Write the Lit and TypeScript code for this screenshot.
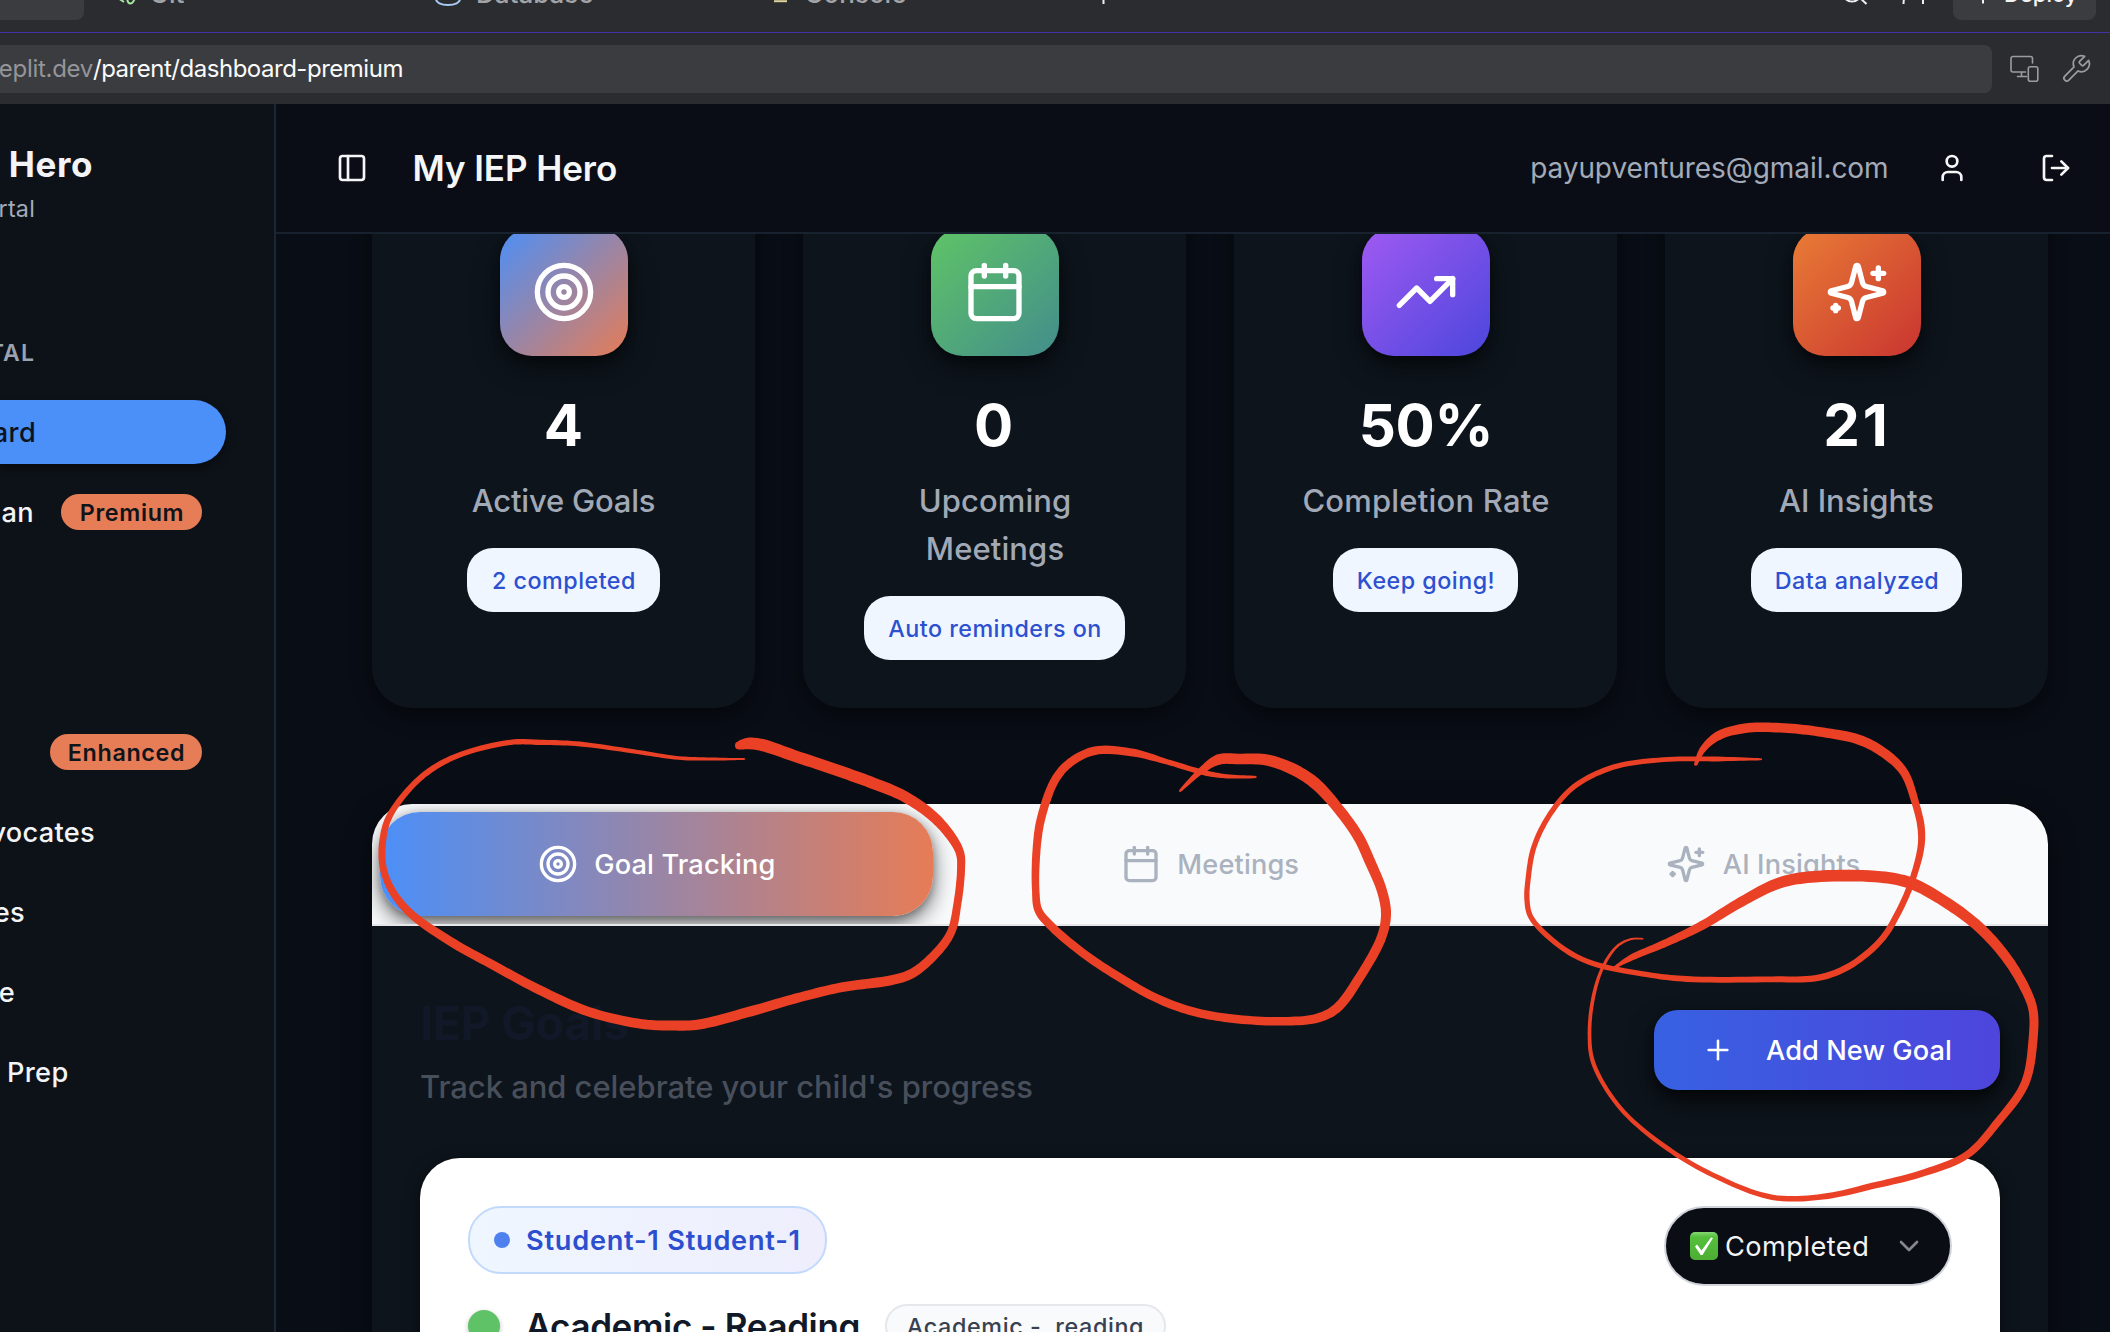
import { LitElement, html, css, svg, nothing } from "lit";
import { customElement, property } from "lit/decorators.js";

const ICONS: Record<string, unknown> = {
  panel: svg`<rect width="18" height="18" x="3" y="3" rx="2"/><path d="M9 3v18"/>`,
  user: svg`<path d="M19 21v-2a4 4 0 0 0-4-4H9a4 4 0 0 0-4 4v2"/><circle cx="12" cy="7" r="4"/>`,
  logout: svg`<path d="M9 21H5a2 2 0 0 1-2-2V5a2 2 0 0 1 2-2h4"/><path d="m16 17 5-5-5-5"/><path d="M21 12H9"/>`,
  target: svg`<circle cx="12" cy="12" r="10"/><circle cx="12" cy="12" r="6"/><circle cx="12" cy="12" r="2"/>`,
  calendar: svg`<path d="M8 2v4"/><path d="M16 2v4"/><rect width="18" height="18" x="3" y="4" rx="2"/><path d="M3 10h18"/>`,
  trend: svg`<path d="M22 7 13.5 15.5 8.5 10.5 2 17"/><path d="M16 7h6v6"/>`,
  sparkles: svg`<path d="M9.937 15.5A2 2 0 0 0 8.5 14.063l-6.135-1.582a.5.5 0 0 1 0-.962L8.5 9.936A2 2 0 0 0 9.937 8.5l1.582-6.135a.5.5 0 0 1 .963 0L14.063 8.5A2 2 0 0 0 15.5 9.937l6.135 1.581a.5.5 0 0 1 0 .964L15.5 14.063a2 2 0 0 0-1.437 1.437l-1.582 6.135a.5.5 0 0 1-.963 0z"/><path d="M20 3v4"/><path d="M22 5h-4"/><path d="M4 17v2"/><path d="M5 18H3"/>`,
  plus: svg`<path d="M5 12h14"/><path d="M12 5v14"/>`,
  chevron: svg`<path d="m6 9 6 6 6-6"/>`,
  wrench: svg`<path d="M14.7 6.3a1 1 0 0 0 0 1.4l1.6 1.6a1 1 0 0 0 1.4 0l3.77-3.77a6 6 0 0 1-7.94 7.94l-6.91 6.91a2.12 2.12 0 0 1-3-3l6.91-6.91a6 6 0 0 1 7.94-7.94l-3.76 3.76z"/>`,
};

@customElement("ui-icon")
class UiIcon extends LitElement {
  @property() name = "";
  @property({ type: Number }) size = 32;
  @property({ type: Number }) weight = 2;
  static styles = css`
    :host { display: inline-flex; flex: none; }
    svg { display: block; fill: none; stroke: currentColor; stroke-linecap: round; stroke-linejoin: round; }
  `;
  render() {
    return html`<svg width=${this.size} height=${this.size} viewBox="0 0 24 24" stroke-width=${this.weight}>${ICONS[this.name]}</svg>`;
  }
}

/* Marker strokes: x, y, pen width for each sampled point. */
type Pt = [number, number, number];
const STROKES: Pt[][] = [
  [[739,745.5,8],[748,743.5,11],[762,745,11.5],[796.8,756.7,11],[833.5,769,11],[870,782,11],[903,795.7,10.5],[931.5,815,10],[950,835,9],[960,853,8],[961,870,7.5],[957.5,903,7.5],[950.7,933,8],[931.5,958,8.5],[911,974,9],[890.7,980.3,9.5],[841.7,987.3,9],[801,997,9],[752,1011,9.5],[698.8,1024.5,9.5],[670,1025.5,9.5],[641.7,1024,9],[588.6,1011.7,9],[539.6,990,9],[494.7,966,8.5],[449.8,941,8.5],[409,912,7.5],[390.6,888,7],[383,866.5,6.5],[382.5,843,6.5],[388.6,818,6],[411,787,5.5],[433.5,768,5.5],[462,754,5],[511,742.3,5],[539.6,742.3,5],[580,744,4.5],[637.6,752,4],[678.4,758,3.5],[707,759,3],[744.5,759,1.5]],
  [[1180,791,2],[1200,771.7,6],[1218.3,759.7,10],[1240,759,10],[1266.7,760,10.5],[1293.3,769.3,11],[1315,783.3,11],[1336.7,806.7,10],[1358.3,836.7,10],[1370,861.7,10],[1381.7,890,9.5],[1386,913.3,9.5],[1381.7,936.7,9],[1360,976.7,9],[1336.7,1008.3,9],[1316.7,1018.3,8.5],[1280,1021.3,8],[1233.3,1018.7,8],[1193.3,1011.7,8],[1156.7,998.3,8],[1120,977.7,8],[1083.3,953.3,8],[1050,925,8],[1038.3,910,7.5],[1035.7,890,7],[1036.3,853.3,7.5],[1040.7,820,8],[1055,780,8],[1070,762.7,8],[1095,750.7,8],[1133.3,752.7,7.5],[1166.7,761.7,5],[1206.7,773.3,5],[1226.7,776.3,4],[1255.7,777,2]],
  [[1695.7,764.3,3],[1702.3,750,6],[1717.8,736,8.5],[1745,728.3,9],[1784,728,9],[1822.9,732.3,9],[1861.8,740.7,9.5],[1889,756.7,9],[1904.6,773.3,8],[1915.5,803.3,7],[1921,826.7,7],[1921,846.7,6.5],[1912.3,880,6],[1898.7,911.7,6],[1881,940,6],[1850,965.7,6],[1819,977.7,6],[1772,979.3,5.5],[1686.7,979,5.5],[1647.8,974.7,5],[1589.5,962.3,5],[1558.4,945,5],[1531,917.3,5],[1527,900,5],[1528,880,5],[1534,846.7,5],[1550.6,813.3,5],[1574,786.7,5],[1612.8,767.3,5],[1663.4,759.7,4.5],[1717.8,759,4.5],[1761.4,759.3,1.5]],
  [[1614.8,967.3,2],[1632,957.3,6],[1663.4,944,7],[1702.3,925.3,8.5],[1741,902,9.5],[1780,882.7,10.5],[1815,876.7,11],[1881,877,11],[1912.3,883.7,11],[1947.4,903.3,10.5],[1978.5,926.7,10],[2005.7,956.7,9.5],[2025,988.3,9],[2033,1010,8.5],[2033,1040,8.5],[2025,1083.3,8],[1998,1121.7,7.5],[1966.8,1155,7],[1920,1174,6.5],[1873.4,1185.7,6],[1822.9,1196.7,5.5],[1772.3,1197.3,5],[1717.8,1177.3,4.5],[1667.3,1148.3,4.5],[1620.6,1108.3,4],[1593.4,1063.3,4],[1589.5,1033.3,3.5],[1593.4,996.7,3.5],[1603,966.7,3],[1616.7,946.7,2.5],[1630.3,939.3,2],[1642.8,938.7,1.5]],
];

function spline(p: Pt[]): Pt[] {
  const out: Pt[] = [];
  for (let i = 0; i < p.length - 1; i++) {
    const a = p[Math.max(0, i - 1)], b = p[i], c = p[i + 1], d = p[Math.min(p.length - 1, i + 2)];
    const k = (u: Pt, v: Pt) => Math.max(1, Math.sqrt(Math.hypot(v[0] - u[0], v[1] - u[1])));
    const t1 = k(a, b), t2 = k(b, c), t3 = k(c, d);
    for (let s = 0; s < 10; s++) {
      const t = s / 10;
      const f = (j: number) => {
        const m1 = t2 * ((b[j] - a[j]) / t1 - (c[j] - a[j]) / (t1 + t2) + (c[j] - b[j]) / t2);
        const m2 = t2 * ((c[j] - b[j]) / t2 - (d[j] - b[j]) / (t2 + t3) + (d[j] - c[j]) / t3);
        return (2 * t ** 3 - 3 * t * t + 1) * b[j] + (t ** 3 - 2 * t * t + t) * m1 + (-2 * t ** 3 + 3 * t * t) * c[j] + (t ** 3 - t * t) * m2;
      };
      out.push([f(0), f(1), Math.max(1, b[2] + (c[2] - b[2]) * t)]);
    }
  }
  out.push(p[p.length - 1]);
  return out;
}

function outline(points: Pt[]) {
  const s = spline(points);
  const l: string[] = [], r: string[] = [];
  s.forEach(([x, y, w], i) => {
    const a = s[Math.max(0, i - 1)], b = s[Math.min(s.length - 1, i + 1)];
    const dx = b[0] - a[0], dy = b[1] - a[1], n = Math.hypot(dx, dy) || 1;
    const h = w * 0.53;
    const ox = (-dy / n) * h, oy = (dx / n) * h;
    l.push(`${(x + ox).toFixed(1)} ${(y + oy).toFixed(1)}`);
    r.unshift(`${(x - ox).toFixed(1)} ${(y - oy).toFixed(1)}`);
  });
  const e = s[s.length - 1];
  return svg`<path d=${"M" + l.concat(r).join("L") + "Z"}/><circle cx=${s[0][0]} cy=${s[0][1]} r=${s[0][2] / 2}/><circle cx=${e[0]} cy=${e[1]} r=${e[2] / 2}/>`;
}

const STATS = [
  { icon: "target", tone: "t-goals", value: "4", label: "Active Goals", note: "2 completed", fit: "f1", w: 193 },
  { icon: "calendar", tone: "t-meet", value: "0", label: "Upcoming Meetings", note: "Auto reminders on", fit: "f2", w: 261 },
  { icon: "trend", tone: "t-rate", value: "50%", label: "Completion Rate", note: "Keep going!", fit: "f3", w: 185 },
  { icon: "sparkles", tone: "t-ai", value: "21", label: "AI Insights", note: "Data analyzed", fit: "f4", w: 211 },
];

/* Sidebar rows; `end` is the right edge of the label. */
const NAV: { label?: string; end?: number; badge?: string; bw?: number; active?: boolean }[] = [
  { label: "ard", end: 36, active: true },
  { label: "an", end: 34, badge: "Premium", bw: 141 },
  {},
  {},
  { badge: "Enhanced", bw: 152 },
  { label: "vocates", end: 95 },
  { label: "es", end: 25 },
  { label: "e", end: 15 },
  { label: "Prep", end: 68.5 },
];

@customElement("app-root")
class AppRoot extends LitElement {
  static styles = css`
    :host { display: block; width: 2110px; height: 1332px; overflow: hidden; position: relative; background: #090d15; font-family: Inter, "Liberation Sans", sans-serif; color: #f3f4f6; }
    * { box-sizing: border-box; }
    .page { display: flex; flex-direction: column; height: 1332px; }

    .tools { height: 33px; flex: none; overflow: hidden; background: #2b2c30; border-bottom: 1px solid #4331a8; }
    .tools-row { display: flex; align-items: center; height: 56px; margin-top: -36px; font-size: 26px; font-weight: 500; color: #a3a4a8; white-space: nowrap; }
    .tools-row svg { display: block; flex: none; fill: none; stroke: currentColor; stroke-width: 2; overflow: visible; }
    .tab-on { width: 84px; height: 56px; background: #3b3c40; border-radius: 0 0 8px 0; }
    .tool { display: flex; align-items: center; }
    .txt { padding-top: 2px; }
    .git { margin-left: 28px; width: 323px; gap: 9.5px; }
    .db { width: 331px; gap: 13px; }
    .con { width: 330px; gap: 10.5px; }
    .git svg { color: #a5e5a0; } .db svg { color: #a9ccf5; } .con svg { color: #ddd39c; }
    .white { color: #f0f0f2; }
    .new { width: 746px; }
    .search { width: 57px; }
    .invite { width: 54px; }
    .deploy { width: 143px; height: 56px; border-radius: 8px; background: #3b3c40; display: flex; align-items: center; gap: 9px; padding-left: 22px; font-size: 22px; color: #f3f3f5; }
    .deploy .txt { padding-top: 3px; }

    .urlbar { height: 71px; flex: none; display: flex; align-items: center; background: #2b2c30; }
    .url { width: 1992px; height: 48px; background: #3b3c40; border-radius: 0 8px 8px 0; display: flex; align-items: center; font-size: 24px; white-space: pre; }
    .host { color: #949599; letter-spacing: -.29px; width: 93px; display: flex; justify-content: flex-end; flex: none; }
    .path { color: #fafafa; letter-spacing: -.48px; }
    .urlbar .dev { margin-left: 17px; fill: none; stroke: #9b9ca0; stroke-width: 1.6; stroke-linejoin: round; stroke-linecap: round; }
    .wrench { margin-left: 19px; color: #9b9ca0; }

    .app { flex: 1; min-height: 0; display: flex; }
    .side { width: 276px; flex: none; background: #0d1218; border-right: 2px solid #1b2634; overflow: hidden; display: flex; flex-direction: column; font-weight: 500; }
    .end { display: flex; justify-content: flex-end; flex: none; white-space: pre; }
    .brand { width: 93px; height: 48px; line-height: 48px; margin-top: 36px; font-size: 35px; font-weight: 700; letter-spacing: .6px; }
    .portal { width: 35px; height: 40px; line-height: 41px; font-size: 23.3px; color: #a3abb8; font-weight: 400; letter-spacing: .2px; }
    .group { width: 35px; height: 32px; line-height: 32px; margin-top: 109px; font-size: 23px; font-weight: 600; letter-spacing: 1.1px; color: #9ba3b0; }
    .nav { margin-top: 31px; display: flex; flex-direction: column; gap: 16px; }
    .row { width: 226px; height: 64px; display: flex; align-items: center; padding-right: 24px; border-radius: 0 32px 32px 0; font-size: 27.2px; letter-spacing: .3px; }
    .row.on { background: #4b8ff9; color: #0d1420; box-shadow: 0 4px 8px rgba(0,0,0,.4); }
    .pill { margin-left: auto; height: 36px; border-radius: 18px; background: #e67d57; color: #10141b; font-size: 23.3px; font-weight: 600; letter-spacing: .65px; display: flex; align-items: center; justify-content: center; padding-left: 1px; }

    .main { flex: 1; min-width: 0; display: flex; flex-direction: column; }
    .head { height: 130px; flex: none; border-bottom: 2px solid #18222e; background: #0a0d15; display: flex; align-items: center; padding: 0 38px 0 60px; color: #f5f6f8; }
    .title { margin-left: 44.5px; font-size: 35px; font-weight: 600; letter-spacing: -.08px; }
    .mail { margin-left: auto; margin-right: 47.500px; font-size: 28px; color: #a3abb8; letter-spacing: -.07px; }
    .out { margin-left: 72px; }
    .body { flex: 1; min-height: 0; overflow: hidden; padding: 0 62px 0 96px; }

    .stats { display: grid; grid-template-columns: repeat(4, 383px); gap: 48px; margin-top: -54px; }
    .stat { height: 528px; border-radius: 40px; background: #0d141b; padding-top: 48px; display: flex; flex-direction: column; align-items: center; box-shadow: 0 8px 20px rgba(0,0,0,.45); }
    .tile { width: 128px; height: 128px; flex: none; border-radius: 32px; display: flex; align-items: center; justify-content: center; color: #fff; box-shadow: 0 12px 28px rgba(0,0,0,.45), 0 4px 8px rgba(0,0,0,.3); }
    .t-goals { background: linear-gradient(135deg, #4b8ff8, #e67c56); }
    .t-meet { background: linear-gradient(135deg, #5fc466, #438d8c); }
    .t-rate { background: linear-gradient(135deg, #a05af2, #4c46dc); }
    .t-ai { background: linear-gradient(135deg, #e97c36, #c93530); }
    .value { margin-top: 33px; height: 72px; line-height: 72px; font-size: 58.2px; font-weight: 700; color: #fff; }
    .f2 .value { margin-left: -2px; }
    .f3 .value { letter-spacing: -.3px; margin-left: 1px; }
    .f4 .value { letter-spacing: 3px; margin-right: -1px; }
    .label { margin-top: 16px; width: 260px; text-align: center; font-size: 31px; line-height: 48px; font-weight: 500; color: #a2a9b6; }
    .f1 .label { letter-spacing: -.2px; }
    .f3 .label { letter-spacing: .2px; padding-left: 1px; }
    .f2 .label { width: 190px; letter-spacing: .1px; padding-left: 1px; }
    .note { margin-top: 23px; height: 64px; flex: none; border-radius: 26px; background: #eff6ff; color: #2d50d0; font-size: 23.3px; font-weight: 500; letter-spacing: .48px; display: flex; align-items: center; justify-content: center; padding: 1px 0 0 1px; white-space: nowrap; }

    .panel { margin-top: 96px; height: 700px; border-radius: 40px; background: #0d141b; box-shadow: 0 8px 26px rgba(0,0,0,.5); }
    .tabs { height: 122px; padding: 8px; background: #f9fafc; border-bottom: 2px solid #e5e7eb; border-radius: 40px 40px 0 0; display: grid; grid-template-columns: repeat(3, 1fr); overflow: hidden; }
    .tab { display: flex; align-items: center; justify-content: center; gap: 16.500px; border-radius: 40px; font-size: 27.2px; font-weight: 500; letter-spacing: .14px; color: #a9b2be; }
    .tab.on { color: #fff; background: linear-gradient(90deg, #4b8ff8, #e67c56); box-shadow: 0 8px 22px rgba(0,0,0,.55), 0 3px 8px rgba(0,0,0,.25); }
    .content { padding: 64px 48px 0; }
    .bar { display: flex; justify-content: space-between; align-items: flex-start; height: 128px; }
    .h { font-size: 46.6px; font-weight: 700; line-height: 66px; color: #111827; letter-spacing: -.41px; }
    .sub { font-size: 31px; font-weight: 500; line-height: 62px; color: #484f5b; letter-spacing: -.05px; }
    .add { margin-top: 20px; width: 346px; height: 80px; border-radius: 24px; background: linear-gradient(90deg, #3761e2, #4e45dc); display: flex; align-items: center; padding-left: 48px; gap: 32px; color: #fff; font-size: 27.2px; font-weight: 500; letter-spacing: .07px; box-shadow: 0 14px 26px rgba(0,0,0,.5), 0 4px 8px rgba(0,0,0,.4); }
    .goal { margin-top: 40px; height: 400px; border-radius: 40px; background: #fff; padding: 48px; display: flex; justify-content: space-between; align-items: flex-start; box-shadow: 0 4px 16px rgba(0,0,0,.5); }
    .kid { width: 359px; height: 68px; border: 2px solid #c1dafb; border-radius: 33px; background: linear-gradient(90deg, #eff6ff, #eeeefd); display: flex; align-items: center; padding-left: 24px; gap: 16px; color: #2c4fd0; font-size: 27.2px; font-weight: 600; letter-spacing: .75px; white-space: nowrap; }
    .dot { width: 16px; height: 16px; border-radius: 50%; background: #4f81ee; flex: none; }
    .subject { margin-top: 26px; height: 52px; display: flex; align-items: center; color: #111827; white-space: pre; }
    .done { width: 32px; height: 32px; border-radius: 50%; background: #5fc266; box-shadow: 0 2px 5px rgba(0,0,0,.25); }
    .name { margin-left: 25.500px; width: 334px; font-size: 35px; font-weight: 600; letter-spacing: -.37px; }
    .chip { margin-left: 25.500px; width: 281px; height: 44px; border: 2px solid #e5e7eb; border-radius: 22px; background: #f9fafb; color: #374151; font-size: 23.3px; font-weight: 500; letter-spacing: .64px; display: flex; align-items: center; justify-content: center; }
    .select { width: 288px; height: 80px; border: 2px solid #d1d5db; border-radius: 40px; background: #0a0d14; display: flex; align-items: center; padding-left: 23.500px; color: #f3f4f6; font-size: 27.2px; letter-spacing: .45px; }
    .check { margin-right: 7.5px; display: block; }
    .chev { margin-left: 24px; color: #85878c; }

    .ink { position: absolute; left: 0; top: 0; fill: #ea4025; pointer-events: none; }
  `;

  render() {
    return html`
      <div class="page">
        <div class="tools"><div class="tools-row">
          <div class="tab-on"></div>
          <div class="tool git"><svg width="28" height="28"><path d="M6 20l6 4"/><path d="M15 18c0 5 1 7.5 3.500 7.500s3.500-3 5-6.500"/></svg><span class="txt">Git</span></div>
          <div class="tool db"><svg width="28" height="28"><path d="M1 4v17c0 3.500 5 6 12 6s12-2.500 12-6V4"/></svg><span class="txt">Database</span></div>
          <div class="tool con"><svg width="28" height="28"><path d="M8 23.200h13"/></svg><span class="txt">Console</span></div>
          <div class="tool new white"><svg width="16" height="28"><path d="M7.500 16v10"/></svg></div>
          <div class="tool search white"><svg width="28" height="28"><circle cx="10" cy="14" r="9.500"/><path d="M16.500 18.500l8 7.500"/></svg></div>
          <div class="tool invite white"><svg width="28" height="28"><path d="M4.500 26c0-4 .5-6 2-8M24 26v-8"/></svg></div>
          <div class="deploy"><svg width="20" height="28"><path d="M8 14v11.500"/></svg><span class="txt">Deploy</span></div>
        </div></div>

        <div class="urlbar">
          <div class="url"><span class="host">eplit.dev</span><span class="path">/parent/dashboard-premium</span></div>
          <svg class="dev" width="32" height="32" viewBox="0 0 32 32"><path d="M23.500 10V5.500a2 2 0 0 0-2-2H4a2 2 0 0 0-2 2v11.500a2 2 0 0 0 2 2h12.500M12.500 19v4M8.500 23.500h9"/><rect x="19.300" y="13.700" width="9.500" height="14.500" rx="2"/></svg>
          <ui-icon class="wrench" name="wrench" size="32" weight="1.3"></ui-icon>
        </div>

        <div class="app">
          <div class="side">
            <div class="end brand">Hero</div>
            <div class="end portal">rtal</div>
            <div class="end group">TAL</div>
            <div class="nav">
              ${NAV.map((n) => html`<div class="row ${n.active ? "on" : ""}">
                ${n.label ? html`<span class="end" style="width:${n.end}px">${n.label}</span>` : nothing}
                ${n.badge ? html`<span class="pill" style="width:${n.bw}px">${n.badge}</span>` : nothing}
              </div>`)}
            </div>
          </div>

          <div class="main">
            <div class="head">
              <ui-icon name="panel"></ui-icon>
              <span class="title">My IEP Hero</span>
              <span class="mail">payupventures@gmail.com</span>
              <ui-icon name="user"></ui-icon>
              <ui-icon class="out" name="logout"></ui-icon>
            </div>
            <div class="body">
              <div class="stats">
                ${STATS.map((s) => html`<div class="stat ${s.fit}">
                  <div class="tile ${s.tone}"><ui-icon name=${s.icon} size="64"></ui-icon></div>
                  <div class="value">${s.value}</div>
                  <div class="label">${s.label}</div>
                  <div class="note" style="width:${s.w}px">${s.note}</div>
                </div>`)}
              </div>
              <div class="panel">
                <div class="tabs">
                  <div class="tab on"><ui-icon name="target" size="40"></ui-icon>Goal Tracking</div>
                  <div class="tab"><ui-icon name="calendar" size="40"></ui-icon>Meetings</div>
                  <div class="tab"><ui-icon name="sparkles" size="40"></ui-icon>AI Insights</div>
                </div>
                <div class="content">
                  <div class="bar">
                    <div><div class="h">IEP Goals</div><div class="sub">Track and celebrate your child's progress</div></div>
                    <div class="add"><ui-icon name="plus" weight="1.9"></ui-icon>Add New Goal</div>
                  </div>
                  <div class="goal">
                    <div>
                      <div class="kid"><span class="dot"></span>Student-1 Student-1</div>
                      <div class="subject"><span class="done"></span><span class="name">Academic - Reading</span><span class="chip">Academic - ${"\u00a0"}reading</span></div>
                    </div>
                    <div class="select">
                      <svg class="check" width="28" height="28" viewBox="0 0 28 28"><defs><linearGradient id="g" x1="0" y1="0" x2="0" y2="1"><stop offset="0" stop-color="#86d873"/><stop offset=".18" stop-color="#55c03c"/><stop offset="1" stop-color="#4cae34"/></linearGradient></defs><rect width="28" height="28" rx="5" fill="url(#g)"/><path d="M5 14.500l2-2 4.500 6L21 5.500l2 .5-10.500 17h-1.800z" fill="#fff"/></svg>
                      Completed<ui-icon class="chev" name="chevron"></ui-icon>
                    </div>
                  </div>
                </div>
              </div>
            </div>
          </div>
        </div>
      </div>
      <svg class="ink" width="2110" height="1332" viewBox="0 0 2110 1332">${STROKES.map(outline)}</svg>
    `;
  }
}
